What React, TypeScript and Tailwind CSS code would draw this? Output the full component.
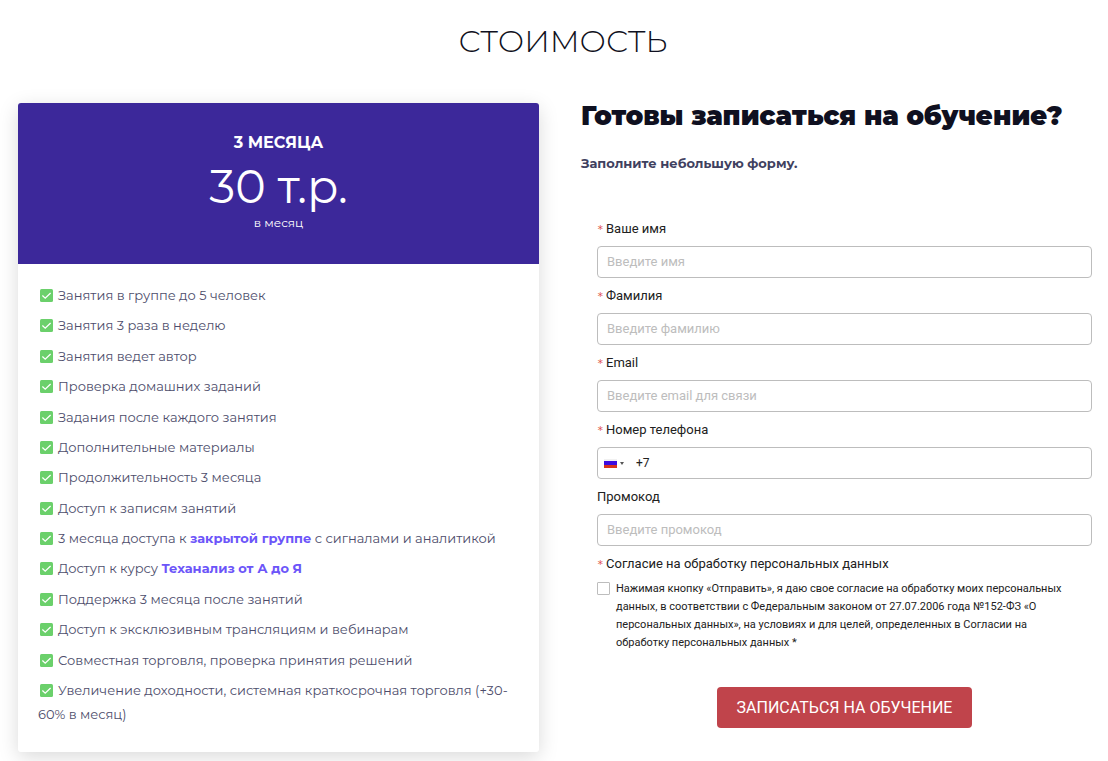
import React, { useState } from 'react';

interface FieldProps {
  id: string;
  label: string;
  required?: boolean;
  children: React.ReactNode;
}

const inputClass =
  'block w-full h-8 rounded border border-[#bdbdbd] bg-white px-[9px] pb-px text-[13px] text-[#212121] placeholder:text-[#bdbdbd] outline-none focus:border-[#3c289a]';

const features: React.ReactNode[] = [
  'Занятия в группе до 5 человек',
  'Занятия 3 раза в неделю',
  'Занятия ведет автор',
  'Проверка домашних заданий',
  'Задания после каждого занятия',
  'Дополнительные материалы',
  'Продолжительность 3 месяца',
  'Доступ к записям занятий',
  <>
    3 месяца доступа к <a href="#group" className="font-bold text-[#6c55f9]">закрытой группе</a> с сигналами и аналитикой
  </>,
  <>
    Доступ к курсу <a href="#course" className="font-bold text-[#6c55f9]">Теханализ от А до Я</a>
  </>,
  'Поддержка 3 месяца после занятий',
  'Доступ к эксклюзивным трансляциям и вебинарам',
  'Совместная торговля, проверка принятия решений',
  <>
    Увеличение доходности, системная краткосрочная торговля (+30-
    <br />
    60% в месяц)
  </>,
];

const CheckIcon = () => (
  <svg viewBox="0 0 13 13" className="inline-block size-[13px] ml-0.5 mr-[5px] align-[-2px]" aria-hidden="true">
    <rect width="13" height="13" rx="1.5" fill="#6bd06b" />
    <path d="M2.4 6.6l2.8 2.6 5.4-5.2" fill="none" stroke="#fff" strokeWidth="1.3" />
  </svg>
);

const Label = ({ id, label, required }: { id: string; label: string; required?: boolean }) => (
  <label htmlFor={id} className="flex items-center gap-[3px] h-5 text-[13px] text-[#212121]">
    {required && <span className="w-1.5 pt-0.5 text-[11px] leading-5 font-['DejaVu_Sans_Mono',monospace] text-[#e0524d]">*</span>}
    {label}
  </label>
);

const Field = ({ id, label, required, children }: FieldProps) => (
  <div className="flex flex-col gap-[7px]">
    <Label id={id} label={label} required={required} />
    {children}
  </div>
);

const PriceCard = () => (
  <section className="flex flex-col rounded-[3px] overflow-hidden bg-white shadow-[0_5px_20px_rgba(0,0,0,0.15)]">
    <div className="h-[161px] bg-[#3c289a] text-white text-center pt-7">
      <h3 className="text-base leading-6 font-bold">3 МЕСЯЦА</h3>
      <p className="text-[46px] leading-[64px] font-normal">30 т.р.</p>
      <p className="text-xs leading-2">в месяц</p>
    </div>
    <ul className="flex-1 flex flex-col justify-between px-5 pt-[19px] pb-[26px] text-[13px] leading-6 text-[#4d4d6b]">
      {features.map((feature, i) => (
        <li key={i}>
          <CheckIcon />
          {feature}
        </li>
      ))}
    </ul>
  </section>
);

const PhoneInput = () => (
  <div className="relative">
    <input id="phone" type="tel" defaultValue="+7" className="block w-full h-8 rounded border border-[#bdbdbd] bg-white pl-[38px] pb-px text-[12px] text-[#212121] outline-none" />
    <button type="button" aria-label="Выбор страны" className="absolute inset-y-0 left-[7px] flex items-center gap-[3px]">
      <svg viewBox="0 0 13 9" className="w-[13px] h-[9px]">
        <rect width="13" height="3" fill="#f1f1f1" />
        <rect y="2" width="13" height="4" fill="#3d0be0" />
        <rect y="6" width="13" height="3" fill="#d8331c" />
      </svg>
      <svg viewBox="0 0 4 3" className="w-1 h-[3px]">
        <path d="M0 0h4L2 3z" fill="#555" />
      </svg>
    </button>
  </div>
);

const SignupForm = () => {
  const [agree, setAgree] = useState(false);

  return (
    <section className="pb-6">
      <h2 className="text-[26px] leading-[26px] font-black text-[#0f1020]">Готовы записаться на обучение?</h2>
      <p className="mt-[22px] text-[13px] leading-6 font-bold text-[#3f4160]">Заполните небольшую форму.</p>

      <form className="mt-11 px-4 flex flex-col gap-2 font-['Roboto',sans-serif]" onSubmit={(e) => e.preventDefault()}>
        <Field id="name" label="Ваше имя" required>
          <input id="name" placeholder="Введите имя" className={inputClass} />
        </Field>
        <Field id="surname" label="Фамилия" required>
          <input id="surname" placeholder="Введите фамилию" className={inputClass} />
        </Field>
        <Field id="email" label="Email" required>
          <input id="email" type="email" placeholder="Введите email для связи" className={inputClass} />
        </Field>
        <Field id="phone" label="Номер телефона" required>
          <PhoneInput />
        </Field>
        <Field id="promo" label="Промокод">
          <input id="promo" placeholder="Введите промокод" className={inputClass} />
        </Field>

        <div>
          <Label id="agree" label="Согласие на обработку персональных данных" required />
          <div className="mt-1.5 flex items-start gap-1.5">
            <input
              id="agree"
              type="checkbox"
              checked={agree}
              onChange={(e) => setAgree(e.target.checked)}
              className="appearance-none shrink-0 size-[13px] mt-0.5 rounded-[1px] border border-[#bdbdbd] bg-white checked:bg-[#c0444b]"
            />
            <label htmlFor="agree" className="pr-4 text-[11px] leading-[18px] text-[#212121]">
              Нажимая кнопку «Отправить», я даю свое согласие на обработку моих персональных данных, в соответствии с
              Федеральным законом от 27.07.2006 года №152-ФЗ «О персональных данных», на условиях и для целей,
              определенных в Согласии на обработку персональных данных *
            </label>
          </div>
        </div>

        <button type="submit" className="self-center mt-[27px] h-[41px] px-5 rounded bg-[#c0444b] text-base text-white">
          ЗАПИСАТЬСЯ НА ОБУЧЕНИЕ
        </button>
      </form>
    </section>
  );
};

export default function App() {
  return (
    <main className="bg-white pl-[18px] pr-0 pt-5 pb-[9px] font-['Montserrat','Inter',sans-serif]">
      <h1 className="text-center text-[31px] leading-[43px] font-light text-[#0f1020]">СТОИМОСТЬ</h1>
      <div className="mt-10 grid grid-cols-[521fr_527fr] gap-[42px]">
        <PriceCard />
        <SignupForm />
      </div>
    </main>
  );
}
